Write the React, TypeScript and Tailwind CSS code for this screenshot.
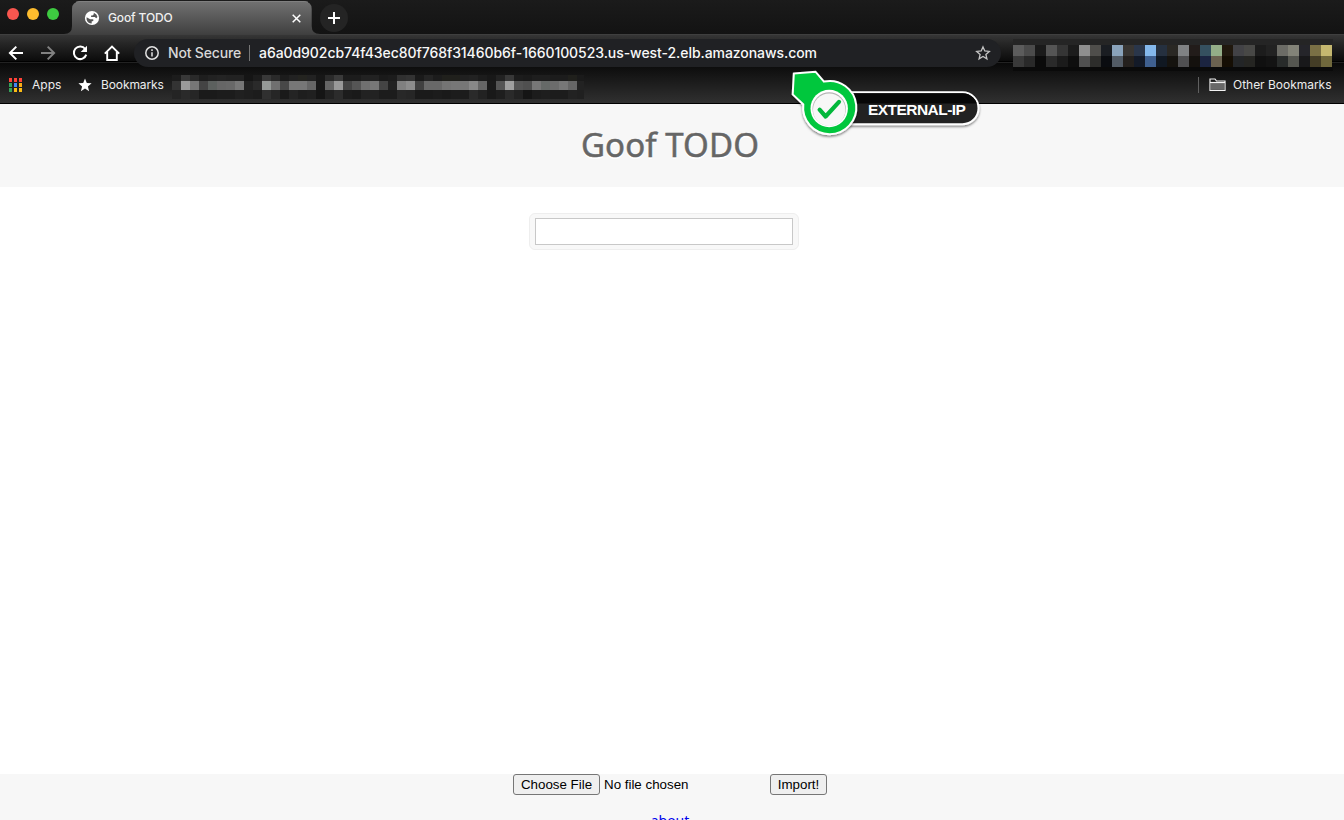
import React from "react";

const bookmarkCells: string[] = (
  "333 999 777 444 5c605e 666 686868 777 222 2a2a2a 959997 707070 484848 777 777 666 181818 666 999 444 555 707070 777 444 222 808080 8c8c8c 404040 686868 686868 747474 777 777 888 666 1a1a1a 555 a0a0a0 555 505050 777 666a68 6c6c6c 777 666 222"
).split(" ");

const bookmarkTop: string[] = (
  "1c1c1c 383838 2a2a2a 1e1e1e 222 242424 222 222 151515 1c1c1c 383838 2a2a2a 1c1c1c 222 242420 222 171717 2a2a2a 3a3a3a 1c1c1c 1c1c1c 222 222 1a1a1a 1c1c1c 303030 333 1a1a1a 242424 1c1c1c 20201c 20201c 202020 222 1c1c1c 181818 222 383838 1c1c1c 1a1a1a 1e1e1e 1e1e1e 1c1c1c 1c1c1c 20201c 1a1a1a"
).split(" ");

const bookmarkBottom: string[] = (
  "242424 2a2a2a 262626 1a1a1a 1a1a1a 1c1c1c 1c1c1c 202020 1e1e1e 1c1c1c 303030 262626 1a1a1a 242424 1e1e1e 202020 151515 222 2c2c2c 1c1c1c 1a1a1a 222 222 1c1c1c 1c1c1c 282828 262626 1a1a1a 1a1a1a 1c1c1c 1a1a1a 1c1c1c 1c1c1c 2a2a2a 222 191919 1e1e1e 2a2a2a 222 151515 1c1c1c 1e1e1e 1c1c1c 1c1c1c 222 202020"
).split(" ");

const extTop: string[] =
  "5c5c5c 4b4b4b 1a1a1a 555555 353535 1c1c1c 8f8f8f 4f4e4b 1a1d22 8aa3bb 383532 2a364a 84b8ec 25303f 2a2824 808284 221c1a 35505f 94ae88 20180e 424246 484846 1c1c1c 222222 6c6c66 838378 25252a 7a7045 c5b870".split(" ");
const extBottom: string[] =
  "393939 292929 0a0a0a 2a2a2a 1b1b1b 0e0e0e 505050 2d2d2b 0a0c10 525b65 24201d 131a28 3f6090 101822 15130f 505052 14110e 1b2440 6b6250 150e04 232527 252522 101010 131313 282b2a 555650 18181a 443d26 70683c".split(" ");

function Cells({ colors, cell, className }: { colors: string[]; cell: string; className: string }) {
  return (
    <div className={`flex overflow-hidden ${className}`}>
      {colors.map((c, i) => (
        <div key={i} className={`h-full shrink-0 ${cell}`} style={{ backgroundColor: `#${c}` }} />
      ))}
    </div>
  );
}

function TabStrip() {
  return (
    <div className="flex h-[34px] bg-linear-to-b from-[#1b1b1b] to-[#131313]">
      <div className="flex w-[62px] shrink-0 gap-2 pt-2 pl-[7px]">
        <span className="size-3 rounded-full bg-[#f9564f]" />
        <span className="size-3 rounded-full bg-[#fdbc2e]" />
        <span className="size-3 rounded-full bg-[#3ecb41]" />
      </div>
      <div className="relative h-[34px] w-[260px] shrink-0">
        <svg className="absolute inset-0" width="260" height="34" viewBox="0 0 260 34">
          <defs>
            <linearGradient id="tab" x1="0" y1="0" x2="0" y2="1">
              <stop offset="0" stopColor="#717171" />
              <stop offset="1" stopColor="#404040" />
            </linearGradient>
          </defs>
          <path d="M2 34Q10 34 10 26V9Q10 1.500 18 1.500H242Q249.700 1.500 249.700 9V26Q249.700 34 258 34Z" fill="url(#tab)" />
          <path d="M14 2.200Q16 1.500 18 1.500H242Q244 1.500 246 2.200" fill="none" stroke="#808080" />
        </svg>
        <div className="relative flex h-full items-center pt-[2px] pl-[22px]">
          <svg width="16" height="16" viewBox="0 0 16 16">
            <circle cx="8" cy="8" r="7.100" fill="#fff" />
            <path
              d="M2.600 7.300L6.200 9.200H8.600Q9.500 9.200 9.500 10.100T8.500 11.200H7.700V13.600Q3.500 13.500 2.600 9.500ZM9.800 2.700Q13 4 13.500 7L12.200 8.300 10.800 7.100H7.100V5.400H8.500L9.800 4.300Z"
              fill="#555"
            />
          </svg>
          <span className="ml-2 w-[172px] text-[12px] font-medium tracking-[-0.13px] whitespace-nowrap text-[#f0f0f0]">Goof TODO</span>
        </div>
        <svg className="absolute top-[14px] left-[229.500px]" width="9" height="9" viewBox="0 0 9 9" stroke="#fff" strokeWidth="1.500">
          <path d="M.7.7l7.600 7.600M8.300.7L.7 8.300" />
        </svg>
      </div>
      <div className="mt-1 -ml-[2px] flex size-7 items-center justify-center rounded-full bg-[#242424]">
        <svg width="12" height="12" viewBox="0 0 12 12" stroke="#fff" strokeWidth="2">
          <path d="M6 0v12M0 6h12" />
        </svg>
      </div>
    </div>
  );
}

function Toolbar() {
  return (
    <div className="flex h-[37px] items-center">
      <div className="flex w-[134px] shrink-0 items-center gap-4 pl-2">
        <svg width="16" height="16" viewBox="0 0 16 16" fill="none" stroke="#fff" strokeWidth="2">
          <path d="M15 8H2M8.300 1.600L1.900 8l6.400 6.400" />
        </svg>
        <svg width="16" height="16" viewBox="0 0 16 16" fill="none" stroke="#818181" strokeWidth="2">
          <path d="M1 8h13M7.700 1.600L14.100 8l-6.400 6.400" />
        </svg>
        <svg width="16" height="16" viewBox="0 0 16 16" fill="none" stroke="#fff" strokeWidth="2">
          <path d="M13.200 4A6.300 6.300 0 1 0 14.200 9.600" />
          <path d="M15 .7V7H8.700Z" fill="#fff" stroke="none" />
        </svg>
        <svg width="16" height="16" viewBox="0 0 16 16" fill="none" stroke="#fff" strokeWidth="1.900">
          <path d="M.8 8.600L8 1.500l7.200 7.100M3.200 7v8h9.600V7" />
        </svg>
      </div>
      <div className="mt-px flex h-7 w-[867px] shrink-0 items-center rounded-full bg-[#202124] pl-[11px]">
        <svg width="14" height="14" viewBox="0 0 14 14" fill="none" stroke="#e2e2e2" strokeWidth="1.500">
          <circle cx="7" cy="7" r="6.200" />
          <path d="M7 6.200v4.300M7 3.300v1.600" />
        </svg>
        <span className="-mt-[2px] ml-[9px] w-[81px] text-[14px] font-medium tracking-[-0.17px] whitespace-nowrap text-[#d8d8d8]">Not Secure</span>
        <span className="h-4 w-px bg-[#777]" />
        <span className="-mt-[2px] ml-[9px] w-[716px] text-[14px] font-medium tracking-[-0.06px] whitespace-nowrap text-[#f8f8f8]">
          a6a0d902cb74f43ec80f768f31460b6f-1660100523.us-west-2.elb.amazonaws.com
        </span>
        <svg width="16" height="16" viewBox="0 0 16 16" fill="none" stroke="#c5c5c5" strokeWidth="1.300">
          <path d="M8 1.900l1.800 4.100 4.500.4-3.400 3 1 4.400L8 11.500l-3.900 2.300 1-4.400-3.400-3 4.500-.4Z" />
        </svg>
      </div>
      <div className="mt-[4px] ml-3 flex w-[320px] flex-col">
        <div className="h-[6px] bg-[#252525]" />
        <Cells colors={extTop} cell="w-[11.030px]" className="h-[11px]" />
        <Cells colors={extBottom} cell="w-[11.030px]" className="h-[11px]" />
        <div className="h-[4px] bg-[#0a0a0a]" />
      </div>
    </div>
  );
}

function BookmarksBar() {
  const dots = ["ff4338", "ff4338", "ff4338", "34a25a", "4285f4", "fbac15", "34a25a", "fbbc15", "fbbc15"];
  return (
    <div className="flex h-[33px] pl-[9px] text-[12px] text-[#ededed]">
      <div className="mt-[7px] grid h-[14px] w-[13px] grid-cols-3 gap-x-[2px] gap-y-px">
        {dots.map((c, i) => (
          <span key={i} className="h-1 w-[3px]" style={{ backgroundColor: `#${c}` }} />
        ))}
      </div>
      <span className="mt-[5px] ml-[10px] w-[46px] leading-[18px]">Apps</span>
      <svg className="mt-[7px] shrink-0" width="14" height="14" viewBox="0 0 14 14" fill="#fff">
        <path d="M7 .4l1.800 4.500 4.800.4-3.700 3.100L11.100 13.200 7 10.600l-4.100 2.600L4.100 8.400.4 5.300l4.800-.4Z" />
      </svg>
      <span className="mt-[5px] ml-[9px] w-[71px] leading-[18px] tracking-[-0.1px]">Bookmarks</span>
      <div className="mt-1 w-[412px]">
        <Cells colors={bookmarkTop} cell="w-[9px]" className="h-[6px]" />
        <Cells colors={bookmarkCells} cell="w-[9px]" className="h-[9px]" />
        <Cells colors={bookmarkBottom} cell="w-[9px]" className="h-[9px]" />
      </div>
      <span className="mt-[6px] ml-auto h-4 w-px bg-[#606060]" />
      <svg className="mt-[7px] ml-[10px]" width="17" height="14" viewBox="0 0 17 14" fill="none" stroke="#f2f2f2" strokeWidth="1.200">
        <path d="M1 3.500V1h5l1.500 2H16v9.500H1Z" />
        <path d="M1.600 5h13.800v6.900H1.600Z" fill="#686868" stroke="none" />
        <path d="M1 4.500h15" />
      </svg>
      <span className="mt-[5px] ml-[7px] w-[111px] leading-[18px] tracking-[-0.02px] whitespace-nowrap">Other Bookmarks</span>
    </div>
  );
}

function ExternalIpCallout() {
  return (
    <div className="absolute top-[66px] left-[788px] h-[76px] w-[200px]">
      <svg className="absolute inset-0" width="200" height="76" viewBox="0 0 200 76">
        <defs>
          <filter id="drop" x="-10%" y="-10%" width="120%" height="130%">
            <feDropShadow dx="0" dy="1.500" stdDeviation="1.300" floodOpacity=".5" />
          </filter>
          <clipPath id="band">
            <path d="M40 0H200V37.500H40Z" />
          </clipPath>
        </defs>
        <g filter="url(#drop)">
          <path d="M40 26.200H174.500A16 16 0 0 1 174.500 58.200H40Z" fill="#242424" stroke="#fff" strokeWidth="2" />
        </g>
        <path d="M40 27.200H174.500A15 15 0 0 1 174.500 57.200H40Z" fill="#070707" clipPath="url(#band)" />
        <g filter="url(#drop)">
          <path d="M5.800 7.600L27.500 5.700 36 15.600A26.600 26.600 0 1 1 15.300 38.500L4.700 28.400Z" fill="#02c73c" stroke="#fff" strokeWidth="2" />
        </g>
        <circle cx="41.200" cy="42.500" r="18.700" fill="#fff" />
        <circle cx="41.200" cy="43" r="16.700" fill="#b4b4b4" />
        <circle cx="41.200" cy="43.800" r="16.200" fill="#f7f7f7" />
        <path d="M31.600 43.700l6 6.800L51 35.900" fill="none" stroke="#02b83b" strokeWidth="4.200" strokeLinecap="round" strokeLinejoin="round" />
      </svg>
      <span className="absolute top-[34px] left-[80px] font-['Liberation_Sans',sans-serif] text-[15.500px] leading-5 font-bold tracking-[-0.55px] whitespace-nowrap text-white">
        EXTERNAL-IP
      </span>
    </div>
  );
}

export default function App() {
  return (
    <div className="relative flex h-[820px] w-[1344px] flex-col overflow-hidden bg-white font-[Inter,sans-serif]">
      <TabStrip />
      <div className="h-[70px] border-b border-black bg-[linear-gradient(#484848_0px,#363636_1px,#252525_10px,#0b0b0b_27px,#000_27px,#000_28px,#222_28px,#222_29px,#090909_29px,#111_37px,#303030_69px)]">
        <Toolbar />
        <BookmarksBar />
      </div>
      <header className="flex h-[83px] justify-center bg-[#f7f7f7] pr-1">
        <h1 className="mt-[18px] font-['Noto_Sans',sans-serif] text-[33px] leading-[46px] tracking-[0.1px] whitespace-nowrap text-[#666] [-webkit-text-stroke:0.5px_#666] [text-shadow:0_2px_0_#fff]">
          Goof TODO
        </h1>
      </header>
      <main className="flex h-[587px] items-start justify-center pt-[26px] pr-4">
        <div className="h-[37px] w-[270px] rounded-[6px] border border-[#eee] bg-[#f8f8f8] px-[5px] py-[4px]">
          <input className="block h-[27px] w-[258px] border border-[#c8c8c8] bg-white outline-none" />
        </div>
      </main>
      <footer className="h-[46px] overflow-hidden bg-[#f7f7f7] font-['Liberation_Sans',sans-serif] text-[13.333px] text-black">
        <div className="flex h-[21px] pl-[513px]">
          <button className="h-[21px] w-[87px] rounded-[3px] border border-[#767676] bg-[#efefef] leading-[19px] whitespace-nowrap">Choose File</button>
          <span className="ml-1 w-[166px] leading-[21px]">No file chosen</span>
          <button className="h-[21px] w-[57px] rounded-[3px] border border-[#767676] bg-[#efefef] leading-[19px]">Import!</button>
        </div>
        <a className="mt-[15px] block pr-1 text-center font-['Noto_Sans',sans-serif] text-[14px] leading-[22px] text-[#00e]">about</a>
      </footer>
      <ExternalIpCallout />
    </div>
  );
}
